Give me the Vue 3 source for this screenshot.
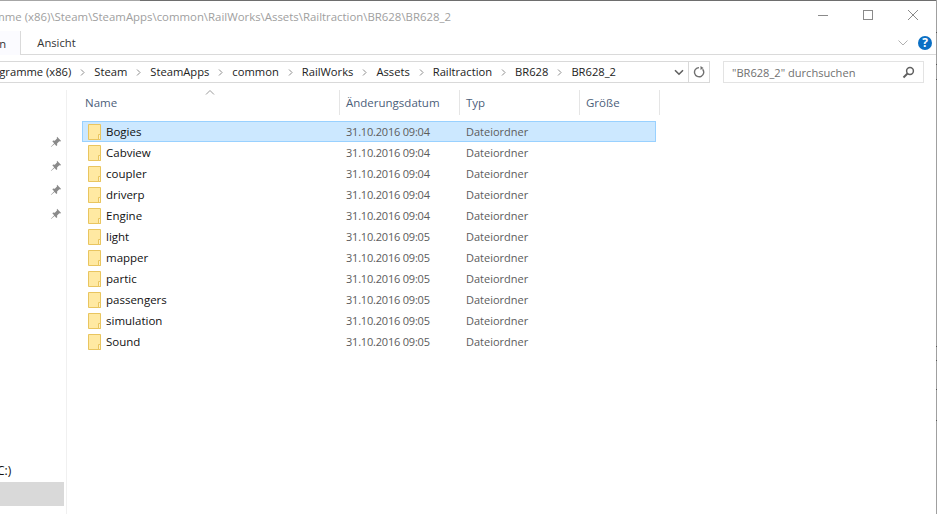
<script setup>
const crumbs = ['Steam', 'SteamApps', 'common', 'RailWorks', 'Assets', 'Railtraction', 'BR628', 'BR628_2']
const rows = [
  ['Bogies', '09:04'], ['Cabview', '09:04'], ['coupler', '09:04'], ['driverp', '09:04'], ['Engine', '09:04'],
  ['light', '09:05'], ['mapper', '09:05'], ['partic', '09:05'], ['passengers', '09:05'], ['simulation', '09:05'], ['Sound', '09:05'],
]
const ticks = [32, 64, 79, 346, 360, 389, 420]
</script>

<template>
  <div class="win">
    <i v-for="t in ticks" :key="t" class="tick" :style="{ top: t + 'px' }"></i>
    <div class="topline"></div>
    <header class="title">
      <div class="title-text"><span>C:\Programme (x86)\Steam\SteamApps\common\RailWorks\Assets\Railtraction\BR628\BR628_2</span></div>
      <div class="caption">
        <svg width="10" height="10" viewBox="0 0 10 10"><path d="M0 5.500h10" stroke="#8a8a8a" fill="none"/></svg>
        <svg width="10" height="10" viewBox="0 0 10 10"><rect x=".5" y=".5" width="9" height="9" stroke="#8a8a8a" fill="none"/></svg>
        <svg width="10" height="10" viewBox="0 0 10 10"><path d="M0 0l10 10M10 0L0 10" stroke="#8a8a8a" fill="none"/></svg>
      </div>
    </header>

    <div class="ribbon">
      <div class="tab active"><span>Datei Freigeben</span></div>
      <div class="tab">Ansicht</div>
      <div class="ribbon-right">
        <svg width="12" height="8" viewBox="0 0 12 8"><path d="M1.500 1.500L6 6l4.500-4.500" stroke="#b0b0b0" fill="none"/></svg>
        <div class="help">?</div>
      </div>
    </div>

    <div class="addr-row">
      <div class="addr">
        <div class="crumbs">
          <span class="crumb">Programme (x86)</span>
          <template v-for="c in crumbs" :key="c">
            <svg class="sep" width="5" height="7" viewBox="0 0 5 7"><path d="M1 .5l3 3-3 3" stroke="#8c8c8c" fill="none"/></svg>
            <span class="crumb">{{ c }}</span>
          </template>
        </div>
        <div class="addr-btn drop">
          <svg width="10" height="7" viewBox="0 0 10 7"><path d="M1 1.200l4 4 4-4" stroke="#606060" stroke-width="1.600" fill="none"/></svg>
        </div>
        <div class="addr-btn refresh">
          <svg width="12" height="12" viewBox="0 0 12 12"><path d="M9.600 3.200A4.600 4.600 0 1 1 6 1.600" stroke="#707070" stroke-width="1.400" fill="none"/><path d="M6 0v4l3-2z" fill="#707070" transform="translate(1.500 0)"/></svg>
        </div>
      </div>
      <div class="search">
        <span>"BR628_2" durchsuchen</span>
        <svg width="13" height="13" viewBox="0 0 13 13"><circle cx="8" cy="5" r="3.400" stroke="#606060" stroke-width="1.500" fill="none"/><path d="M5.500 7.500L1.500 11.500" stroke="#606060" stroke-width="2" fill="none"/></svg>
      </div>
    </div>

    <div class="body">
      <aside class="side">
        <div class="pins">
          <svg v-for="n in 4" :key="n" width="12" height="12" viewBox="0 0 11 11"><path d="M6.500.8l3.700 3.700-1 .6-.7-.2-2 2 .1 1.600-.8.6-1.600-1.700L1 10l-.2-.2 3.100-3.200-1.700-1.600.6-.8 1.600.1 2-2-.2-.7z" fill="#8a8a8a"/></svg>
        </div>
        <div class="drive"><span>C:)</span></div>
        <div class="side-sel"></div>
      </aside>
      <main class="list">
        <svg class="sort" width="10" height="5" viewBox="0 0 10 5"><path d="M1 4.500l4-4 4 4" stroke="#9a9a9a" fill="none"/></svg>
        <div class="cols">
          <div class="col c1">Name</div>
          <div class="col c2">Änderungsdatum</div>
          <div class="col c3">Typ</div>
          <div class="col c4">Größe</div>
        </div>
        <div class="rows">
          <div v-for="(r, i) in rows" :key="r[0]" class="row" :class="{ sel: i === 0 }">
            <svg class="folder" width="13" height="16" viewBox="0 0 13 16">
              <path d="M.5 .5h12v15H.5z" fill="#ffe9a2" stroke="#e9c55f"/>
              <path d="M10.500 10.500h2v5h-2z" fill="#fff1c2" stroke="#e9c55f"/>
            </svg>
            <div class="n">{{ r[0] }}</div>
            <div class="d">31.10.2016 {{ r[1] }}</div>
            <div class="t">Dateiordner</div>
          </div>
        </div>
      </main>
    </div>
  </div>
</template>

<style>
html, body { margin: 0; background: #fff; }
</style>

<style scoped>
.win {
  position: relative; box-sizing: border-box; border-right: 1px solid #a0a0a0;
  width: 937px; height: 514px; background: #fff;
  display: flex; flex-direction: column;
  font-family: "Open Sans", "Noto Sans", sans-serif; font-size: 11.5px; color: #1a1a1a;
}
.tick { position: absolute; right: -1px; width: 1px; height: 1px; background: #555; }
.topline { height: 1px; flex: none; background: linear-gradient(to right, #a6a6a6 0, #a6a6a6 140px, #6e6e6e 140px); }
.title { height: 30px; flex: none; display: flex; align-items: center; }
.title-text { width: 451px; flex: none; display: flex; justify-content: flex-end; overflow: hidden; white-space: nowrap; color: #a0a0a0; font-size: 11.4px; }
.caption { margin-left: auto; margin-top: -2px; display: flex; gap: 35px; padding-right: 18px; }
.ribbon { height: 23px; flex: none; display: flex; border-bottom: 1px solid #dadada; align-items: stretch; }
.tab { width: 71px; display: flex; align-items: center; justify-content: center; color: #333; font-size: 11.2px; }
.tab.active { width: 21px; justify-content: flex-end; background: #fbfbff; border-right: 1px solid #dadada; overflow: hidden; white-space: nowrap; margin-bottom: -1px; padding-right: 14px; box-sizing: border-box; }
.ribbon-right { margin-left: auto; display: flex; align-items: center; gap: 9px; padding-right: 4px; }
.help { width: 14px; height: 14px; border-radius: 50%; background: #0a6fc4; color: #fff; font-weight: 700; font-size: 12px; display: flex; align-items: center; justify-content: center; }
.addr-row { flex: none; display: flex; margin-top: 6px; height: 22px; }
.addr { width: 710px; flex: none; box-sizing: border-box; display: flex; border: 1px solid #d9d9d9; border-left: none; }
.crumbs { flex: 1; min-width: 0; display: flex; justify-content: flex-end; align-items: center; overflow: hidden; white-space: nowrap; gap: 9px; padding: 0 53px 2px 0; font-size: 11.2px; color: #222; }
.crumb { flex: none; }
.sep { flex: none; margin-top: 2px; }
.addr-btn { display: flex; align-items: center; justify-content: center; flex: none; }
.drop { width: 19px; }
.refresh { width: 20px; border-left: 1px solid #d9d9d9; }
.search { width: 201px; margin-left: 13px; box-sizing: border-box; border: 1px solid #e3e3e3; display: flex; align-items: center; justify-content: space-between; padding: 0 8px 0 8px; color: #707070; font-size: 11.1px; }
.body { flex: 1; min-height: 0; display: flex; margin-top: 7px; }
.side { width: 67px; flex: none; box-sizing: border-box; border-right: 1px solid #f0f0f0; position: relative; }
.pins { display: flex; flex-direction: column; gap: 12px; align-items: flex-end; padding: 46px 4px 0 0; }
.drive { position: absolute; left: 0; top: 372px; width: 64px; overflow: hidden; font-size: 12px; color: #111; }
.drive span { margin-left: -3px; }
.side-sel { position: absolute; left: 0; top: 392px; width: 64px; height: 24px; background: #d9d9d9; }
.list { flex: 1; min-width: 0; position: relative; }
.sort { position: absolute; left: 138px; top: 0; }
.cols { display: flex; height: 25px; }
.col { box-sizing: border-box; border-right: 1px solid #e5e5e5; padding-left: 6px; padding-top: 5px; color: #4c607a; font-size: 11.5px; }
.c1 { width: 273px; padding-left: 18px; }
.c2 { width: 120px; }
.c3 { width: 120px; }
.c4 { width: 80px; }
.rows { margin: 6px 0 0 15px; width: 574px; }
.row { height: 21px; box-sizing: border-box; display: flex; align-items: center; border: 1px solid transparent; }
.row.sel { background: #cce8ff; border-color: #99d1ff; }
.folder { flex: none; margin-left: 5px; }
.n { width: 245px; padding-left: 5px; box-sizing: border-box; color: #111; font-size: 11.5px; }
.d { width: 120px; color: #5c5c5c; font-size: 11px; letter-spacing: -.2px; }
.t { color: #5c5c5c; font-size: 11px; }
</style>
